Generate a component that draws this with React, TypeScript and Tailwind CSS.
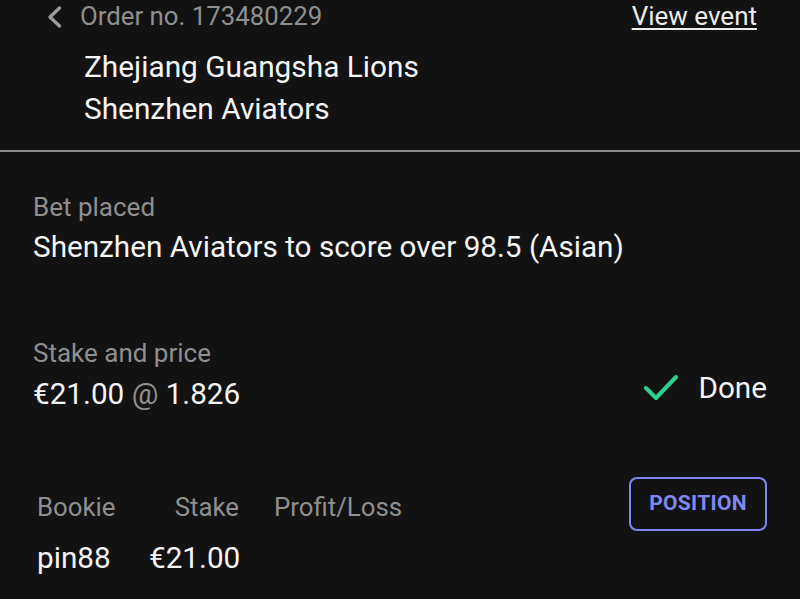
import React from "react";

export default function App() {
  return (
    <div
      className="w-[800px] h-[599px] overflow-hidden bg-[#121212] text-white"
      style={{ fontFamily: "Roboto, 'Noto Sans', sans-serif" }}
    >
      {/* Header */}
      <div className="h-[150px]">
        <div className="flex items-start justify-between pl-[44px] pr-[43px] h-[32px]">
          <div className="flex items-center h-[32px]">
            <svg width="20" height="26" viewBox="0 0 20 26" className="mt-[2px]">
              <path d="M15.5 4 L6 13 L15.5 22" fill="none" stroke="#9a9a9a" strokeWidth="3.4" strokeLinecap="round" strokeLinejoin="round" />
            </svg>
            <span className="ml-[16px] text-[25.8px] leading-[32px] text-[#8f8f8f]">Order no. 173480229</span>
          </div>
          <span className="text-[26px] leading-[32px] text-[#ececec] underline decoration-2 underline-offset-[3px]">View event</span>
        </div>
        <div className="pl-[84px] mt-[14px] text-[29.8px] leading-[42px] text-[#f5f5f5]">
          <div>Zhejiang Guangsha Lions</div>
          <div>Shenzhen Aviators</div>
        </div>
      </div>
      <div className="h-[2px] bg-[#8a8a8a]" />

      {/* Bet placed */}
      <div className="pl-[33px] pt-[39px]">
        <div className="text-[26px] leading-[32px] text-[#8f8f8f]">Bet placed</div>
        <div className="mt-[4px] text-[29.7px] leading-[40px] text-[#f5f5f5]">Shenzhen Aviators to score over 98.5 (Asian)</div>
      </div>

      {/* Stake and price */}
      <div className="flex items-end justify-between pl-[33px] pr-[33px] mt-[70px]">
        <div>
          <div className="text-[26px] leading-[32px] text-[#8f8f8f]">Stake and price</div>
          <div className="mt-[5px] text-[29.7px] leading-[40px] text-[#f5f5f5]">
            €21.00 <span className="text-[#8f8f8f]">@</span> 1.826
          </div>
        </div>
        <div className="flex items-center mb-[6px]">
          <svg width="36" height="30" viewBox="0 0 36 30">
            <path d="M4 15 L14 25 L34 4" fill="none" stroke="#2fd08f" strokeWidth="4" strokeLinecap="round" strokeLinejoin="round" />
          </svg>
          <span className="ml-[20px] text-[29.7px] leading-[40px] text-[#f5f5f5]">Done</span>
        </div>
      </div>

      {/* Table + button */}
      <div className="flex items-start justify-between pl-[37px] pr-[33px] mt-[63px]">
        <div className="pt-[14px]">
          <div className="flex text-[25.8px] leading-[32px] text-[#8f8f8f]">
            <div className="w-[112px]">Bookie</div>
            <div className="w-[90px] text-right">Stake</div>
            <div className="ml-[35px]">Profit/Loss</div>
          </div>
          <div className="flex mt-[15px] text-[29.7px] leading-[40px] text-[#f5f5f5]">
            <div className="w-[112px]">pin88</div>
            <div className="w-[90px] text-right">€21.00</div>
          </div>
        </div>
        <div className="w-[138px] h-[54px] rounded-[8px] border-2 border-[#7f86f2] flex items-center justify-center text-[21px] font-bold text-[#8088f2] tracking-[0.3px]">
          POSITION
        </div>
      </div>
    </div>
  );
}
